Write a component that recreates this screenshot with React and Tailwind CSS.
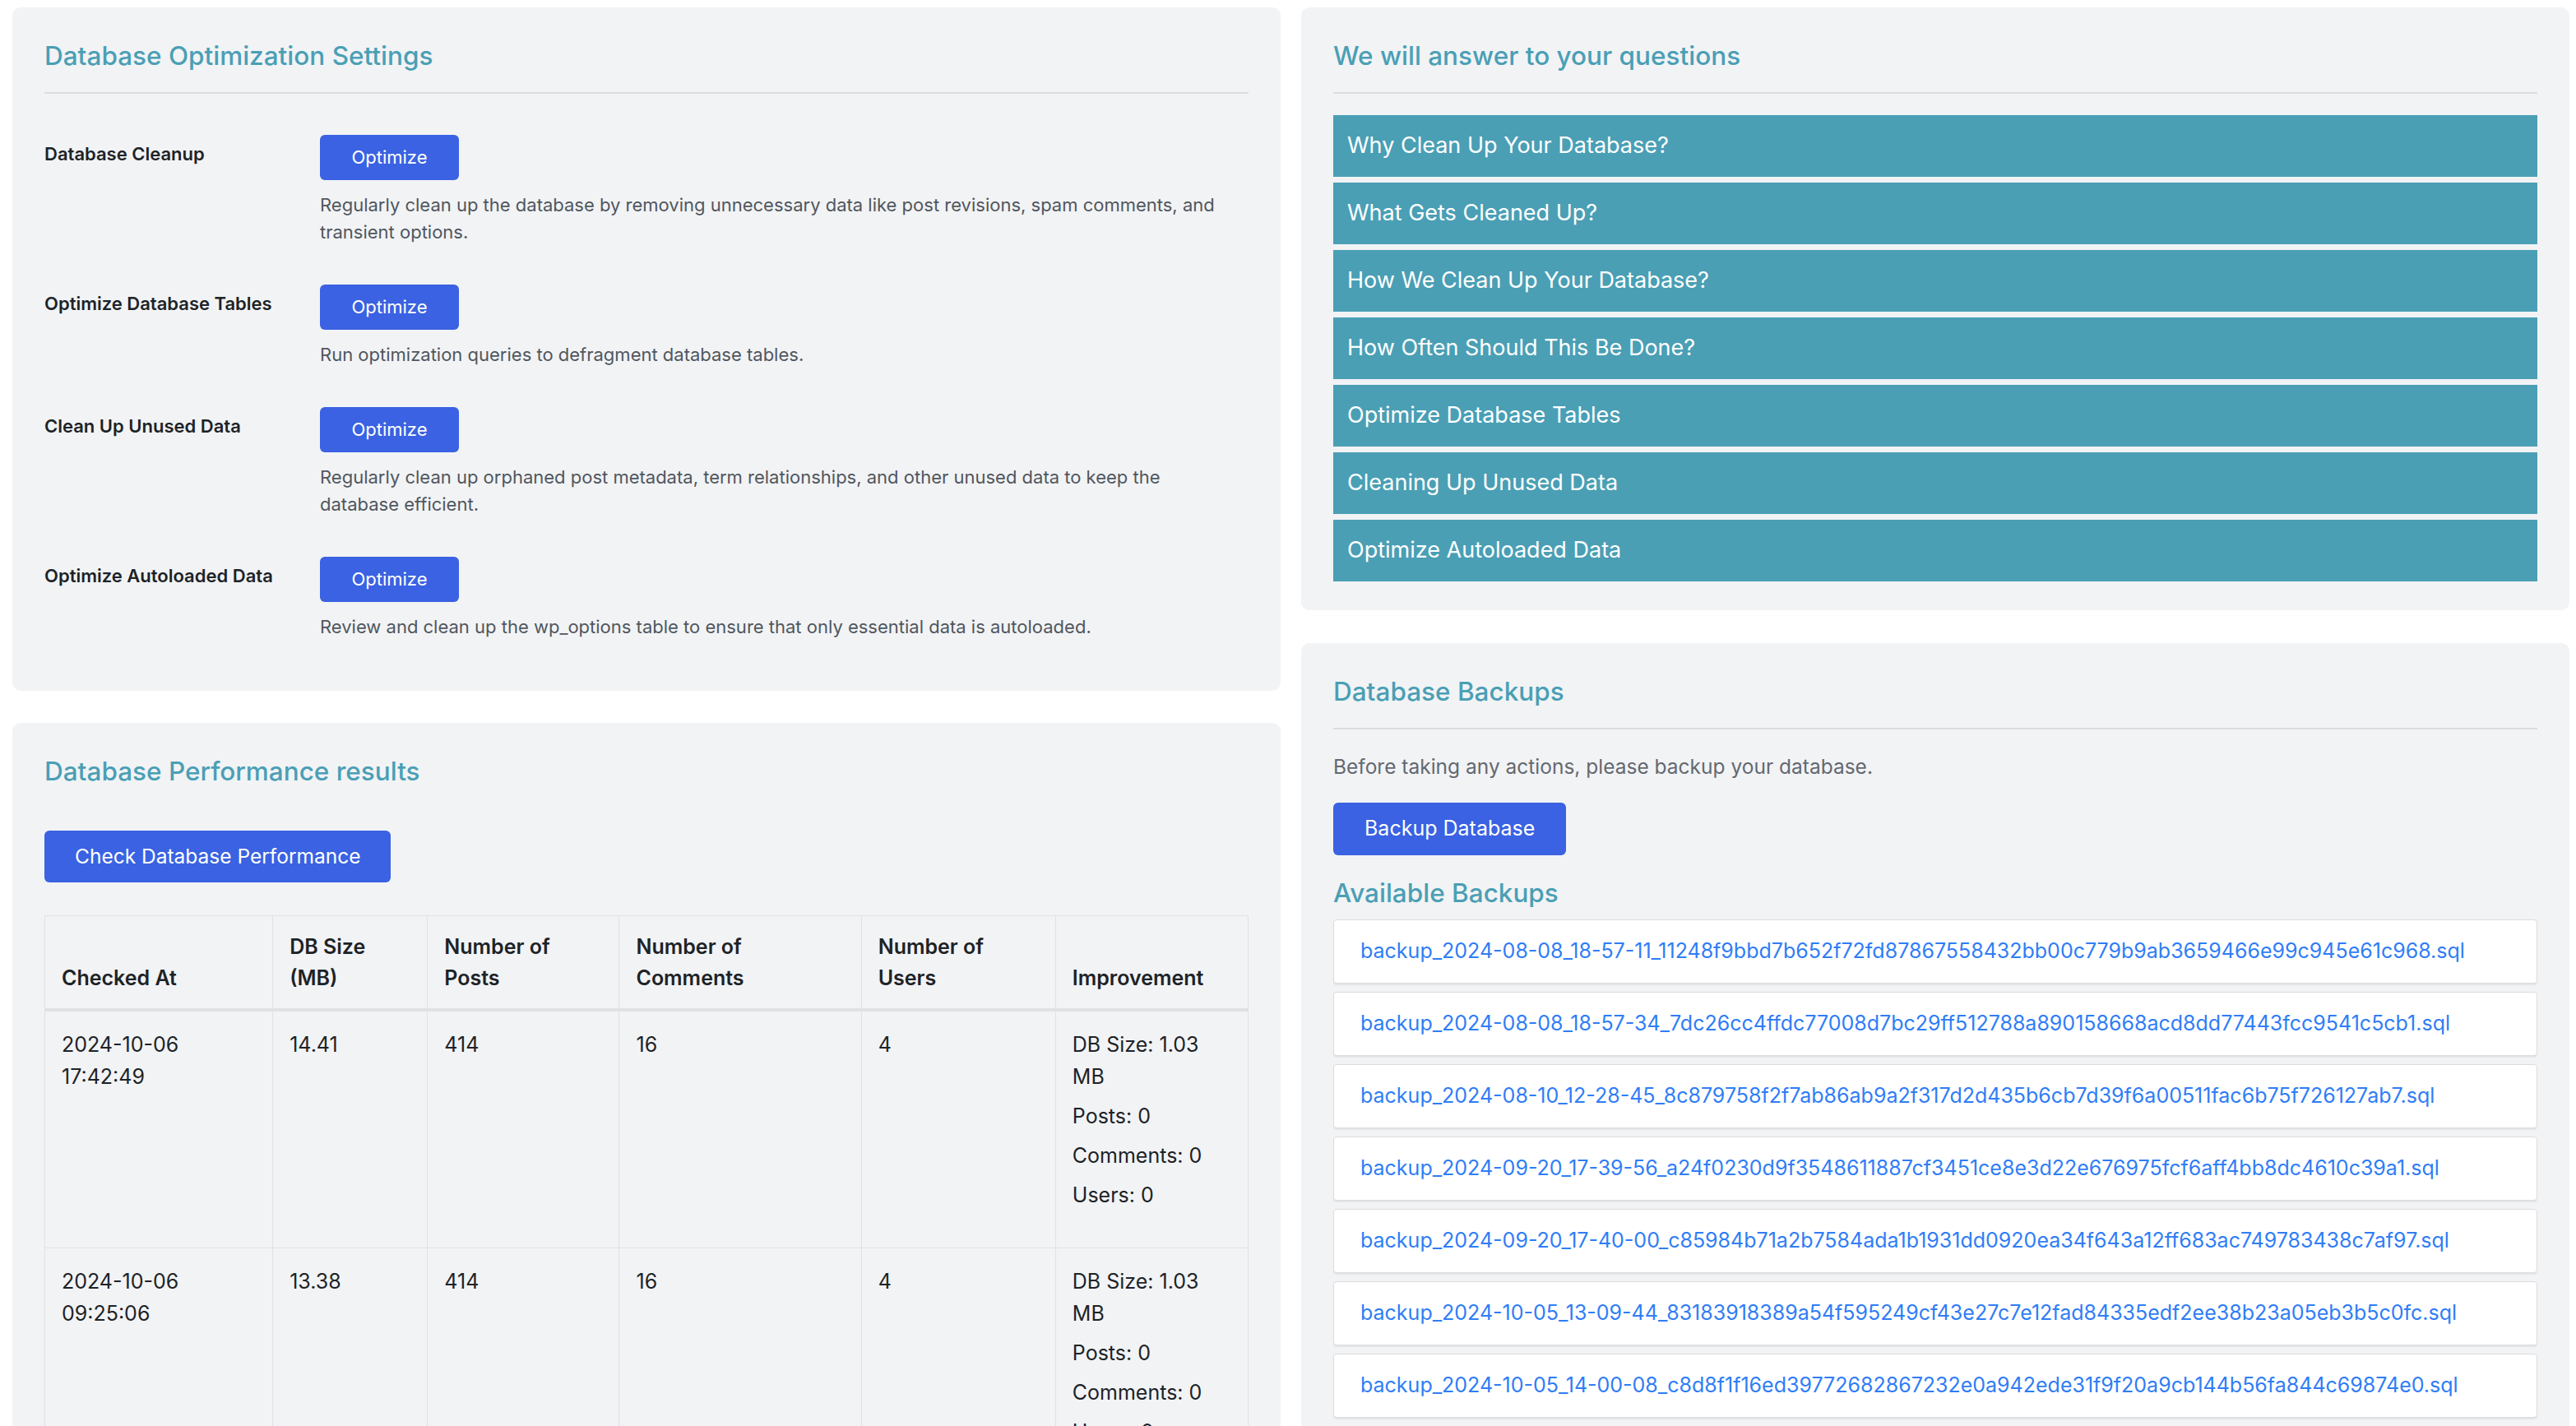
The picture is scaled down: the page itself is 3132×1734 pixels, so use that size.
import React from "react";

const SETTINGS = [
	{
		label: "Database Cleanup",
		desc: "Regularly clean up the database by removing unnecessary data like post revisions, spam comments, and transient options.",
	},
	{
		label: "Optimize Database Tables",
		desc: "Run optimization queries to defragment database tables.",
	},
	{
		label: "Clean Up Unused Data",
		desc: "Regularly clean up orphaned post metadata, term relationships, and other unused data to keep the database efficient.",
	},
	{
		label: "Optimize Autoloaded Data",
		desc: "Review and clean up the wp_options table to ensure that only essential data is autoloaded.",
	},
];

const FAQ = [
	"Why Clean Up Your Database?",
	"What Gets Cleaned Up?",
	"How We Clean Up Your Database?",
	"How Often Should This Be Done?",
	"Optimize Database Tables",
	"Cleaning Up Unused Data",
	"Optimize Autoloaded Data",
];

const BACKUPS = [
	"backup_2024-08-08_18-57-11_11248f9bbd7b652f72fd87867558432bb00c779b9ab3659466e99c945e61c968.sql",
	"backup_2024-08-08_18-57-34_7dc26cc4ffdc77008d7bc29ff512788a890158668acd8dd77443fcc9541c5cb1.sql",
	"backup_2024-08-10_12-28-45_8c879758f2f7ab86ab9a2f317d2d435b6cb7d39f6a00511fac6b75f726127ab7.sql",
	"backup_2024-09-20_17-39-56_a24f0230d9f3548611887cf3451ce8e3d22e676975fcf6aff4bb8dc4610c39a1.sql",
	"backup_2024-09-20_17-40-00_c85984b71a2b7584ada1b1931dd0920ea34f643a12ff683ac749783438c7af97.sql",
	"backup_2024-10-05_13-09-44_83183918389a54f595249cf43e27c7e12fad84335edf2ee38b23a05eb3b5c0fc.sql",
	"backup_2024-10-05_14-00-08_c8d8f1f16ed39772682867232e0a942ede31f9f20a9cb144b56fa844c69874e0.sql",
];

const RESULTS = [
	{ date: "2024-10-06", time: "17:42:49", size: "14.41", posts: 414, comments: 16, users: 4 },
	{ date: "2024-10-06", time: "09:25:06", size: "13.38", posts: 414, comments: 16, users: 4 },
];

const Card = ({ children, className = "" }) => (
	<div className={`rounded-[10px] bg-[#f2f3f5] px-[39px] pt-[39px] ${className}`}>
		{children}
	</div>
);

const Heading = ({ children }) => (
	<h2 className="text-[31.5px] leading-[40px] font-medium text-[#4a9fb5]">
		{children}
	</h2>
);

const Divider = () => <div className="mt-[24px] h-[2px] bg-[#dcdcde]" />;

const th =
	"border border-[#dfe1e4] border-b-[4px] px-[20px] py-[18px] text-left align-bottom text-[25px] leading-[38px] font-semibold text-[#1d2327]";
const td =
	"border border-[#dfe1e4] px-[20px] pt-[21px] pb-[44px] align-top text-[25px] leading-[39px] text-[#1d2327]";

const App = () => {
	return (
		<div className="min-h-screen bg-white pt-[9px] pl-[15px] pr-[8px] font-['Inter','Noto_Sans',sans-serif]">
			<div className="grid grid-cols-2 items-start gap-x-[25px]">
				{/* Left column */}
				<div className="flex flex-col gap-[39px]">
					<Card className="pb-[61px]">
						<Heading>Database Optimization Settings</Heading>
						<Divider />
						<div className="mt-[50px] flex flex-col gap-[47px]">
							{SETTINGS.map((s) => (
								<div key={s.label} className="flex">
									<div className="w-[335px] shrink-0 pt-[7px] text-[22px] leading-[33px] font-semibold text-[#1d2327]">
										{s.label}
									</div>
									<div className="flex-1">
										<button className="h-[55px] w-[169px] rounded-[6px] bg-[#3a62e2] text-[22px] text-white">
											Optimize
										</button>
										<p className="mt-[14px] max-w-[1100px] text-[22px] leading-[33px] text-[#50575e]">
											{s.desc}
										</p>
									</div>
								</div>
							))}
						</div>
					</Card>

					<Card className="pb-[40px]">
						<Heading>Database Performance results</Heading>
						<button className="mt-[52px] h-[63px] rounded-[6px] bg-[#3a62e2] px-[37px] text-[24.5px] text-white">
							Check Database Performance
						</button>
						<table className="mt-[40px] w-full table-fixed border-collapse">
							<colgroup>
								<col className="w-[277px]" />
								<col className="w-[188px]" />
								<col className="w-[233px]" />
								<col className="w-[294px]" />
								<col className="w-[236px]" />
								<col className="w-[234px]" />
							</colgroup>
							<thead>
								<tr>
									<th className={th}>Checked At</th>
									<th className={th}>
										DB Size
										<br />
										(MB)
									</th>
									<th className={th}>
										Number of
										<br />
										Posts
									</th>
									<th className={th}>
										Number of
										<br />
										Comments
									</th>
									<th className={th}>
										Number of
										<br />
										Users
									</th>
									<th className={th}>Improvement</th>
								</tr>
							</thead>
							<tbody>
								{RESULTS.map((r) => (
									<tr key={r.time}>
										<td className={td}>
											{r.date}
											<br />
											{r.time}
										</td>
										<td className={td}>{r.size}</td>
										<td className={td}>{r.posts}</td>
										<td className={td}>{r.comments}</td>
										<td className={td}>{r.users}</td>
										<td className={td}>
											<div className="flex flex-col gap-[9px]">
												<div>
													DB Size: 1.03
													<br />
													MB
												</div>
												<div>Posts: 0</div>
												<div>Comments: 0</div>
												<div>Users: 0</div>
											</div>
										</td>
									</tr>
								))}
							</tbody>
						</table>
					</Card>
				</div>

				{/* Right column */}
				<div className="flex flex-col gap-[40px]">
					<Card className="pb-[35px]">
						<Heading>We will answer to your questions</Heading>
						<Divider />
						<div className="mt-[26px] flex flex-col gap-[7px]">
							{FAQ.map((q) => (
								<div
									key={q}
									className="flex h-[75px] items-center bg-[#4a9fb5] px-[17px] text-[27px] text-white"
								>
									{q}
								</div>
							))}
						</div>
					</Card>

					<Card className="pb-[40px]">
						<Heading>Database Backups</Heading>
						<Divider />
						<p className="mt-[28px] text-[24.5px] leading-[34px] text-[#646970]">
							Before taking any actions, please backup your database.
						</p>
						<button className="mt-[27px] h-[64px] rounded-[6px] bg-[#3a62e2] px-[38px] text-[25px] text-white">
							Backup Database
						</button>
						<h3 className="mt-[26px] text-[31.5px] leading-[40px] font-medium text-[#4a9fb5]">
							Available Backups
						</h3>
						<div className="mt-[12px] flex flex-col gap-[10px]">
							{BACKUPS.map((b) => (
								<div
									key={b}
									className="flex h-[78px] items-center rounded-[4px] border border-[#dcdcde] bg-white px-[32px] shadow-[0_2px_1px_rgba(0,0,0,0.06)]"
								>
									<a href="#" className="text-[25px] text-[#2f7df6]">
										{b}
									</a>
								</div>
							))}
						</div>
					</Card>
				</div>
			</div>
		</div>
	);
};

export default App;
